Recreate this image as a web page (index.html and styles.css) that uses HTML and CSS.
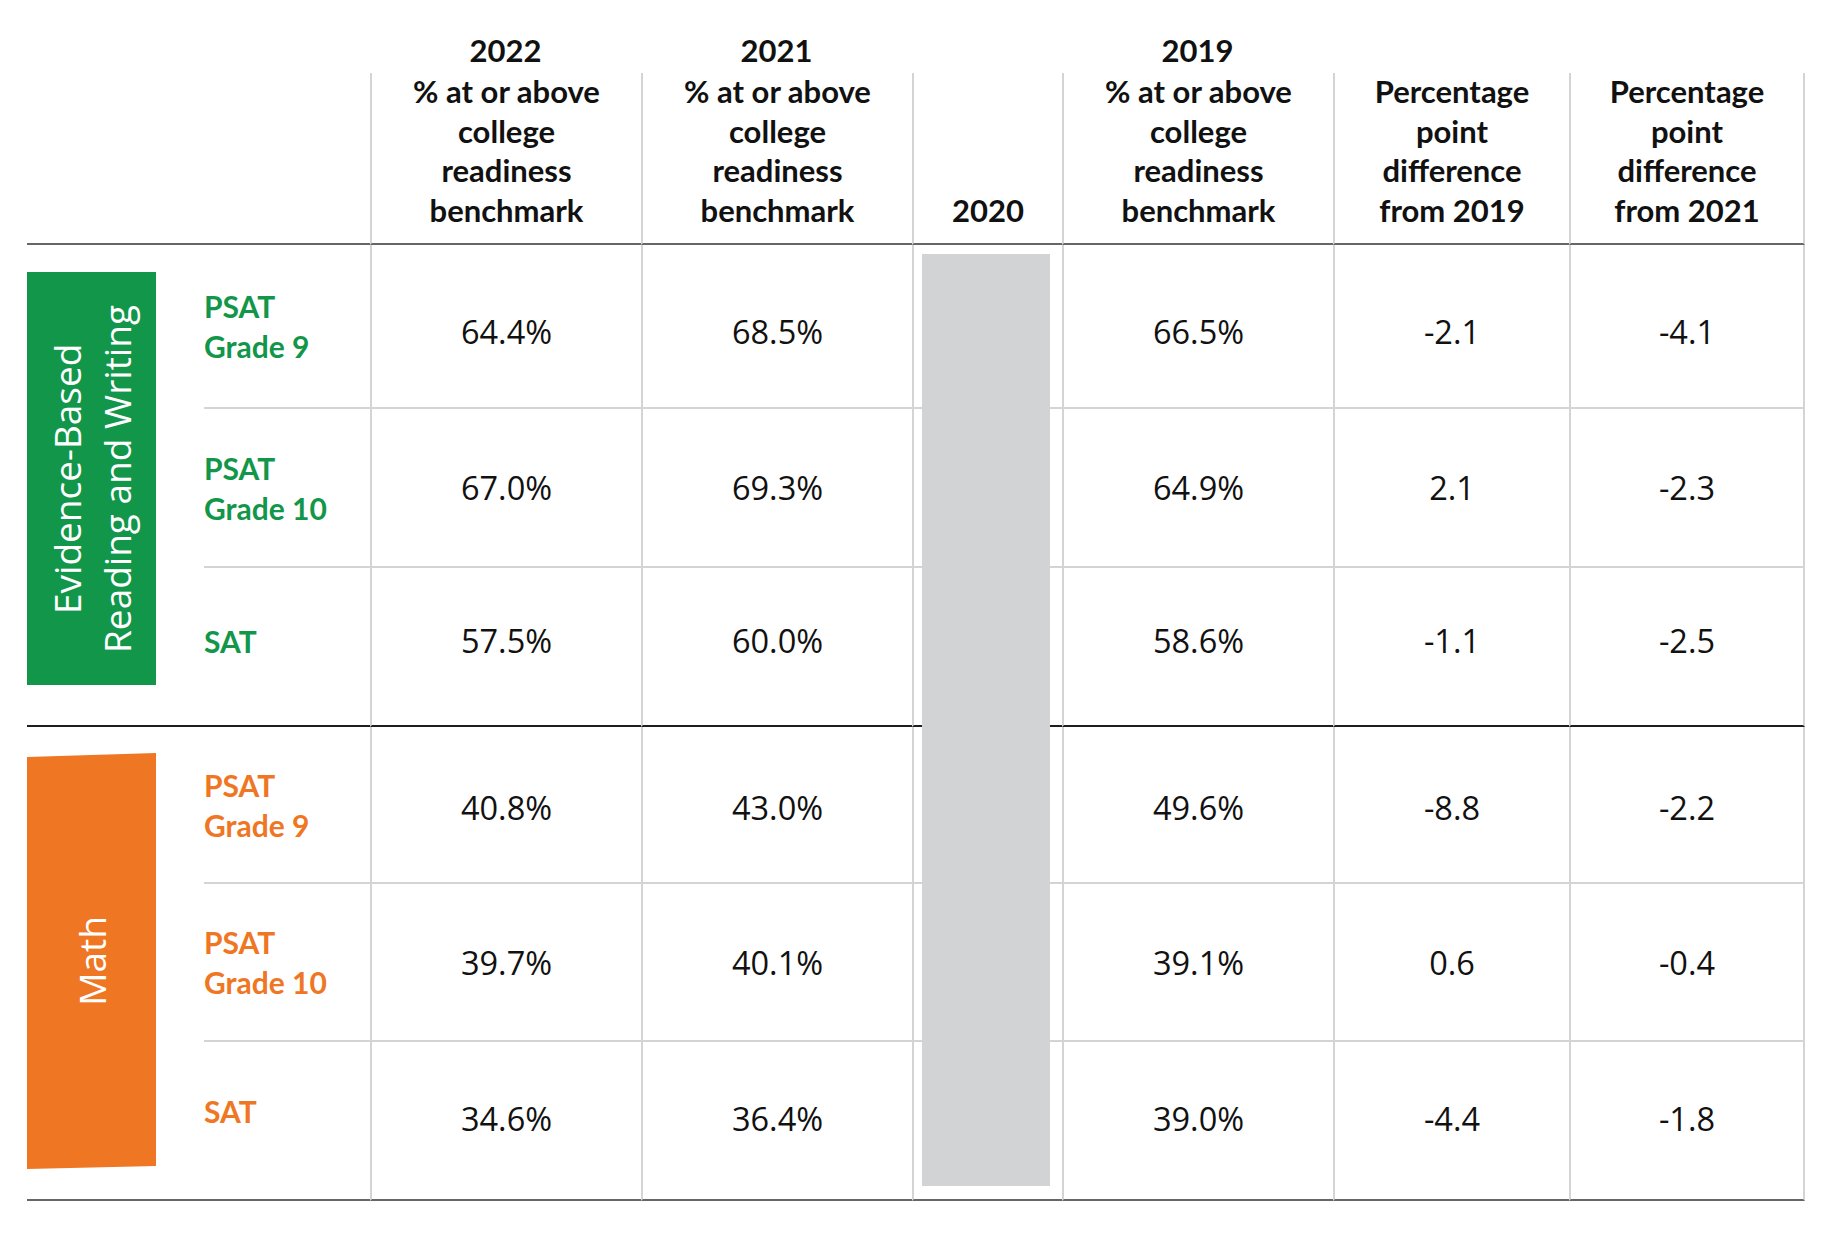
FILE: index.html
```html
<!DOCTYPE html>
<html lang="en">
<head>
<meta charset="utf-8">
<title>College readiness benchmarks</title>
<link rel="stylesheet" href="styles.css">
</head>
<body>
<div class="table">
  <div class="yr"></div>
  <div class="yr"></div>
  <div class="yr">2022</div>
  <div class="yr">2021</div>
  <div class="yr"></div>
  <div class="yr">2019</div>
  <div class="yr"></div>
  <div class="yr"></div>

  <div class="hd"></div>
  <div class="hd"></div>
  <div class="hd vl">% at or above<br>college<br>readiness<br>benchmark</div>
  <div class="hd vl">% at or above<br>college<br>readiness<br>benchmark</div>
  <div class="hd vl">2020</div>
  <div class="hd vl">% at or above<br>college<br>readiness<br>benchmark</div>
  <div class="hd vl">Percentage<br>point<br>difference<br>from 2019</div>
  <div class="hd vl vr">Percentage<br>point<br>difference<br>from 2021</div>

  <div class="grp bd">
    <div class="tag tag-green"><span class="vt">Evidence-Based<br>Reading and Writing</span></div>
  </div>
  <div class="lbl green bl">PSAT<br>Grade 9</div>
  <div class="num vl bl down">64.4%</div>
  <div class="num vl bl down">68.5%</div>
  <div class="y20 vl bl first"><div class="fill"></div></div>
  <div class="num vl bl down">66.5%</div>
  <div class="num vl bl down">-2.1</div>
  <div class="num vl vr bl down">-4.1</div>

  <div class="lbl green bl">PSAT<br>Grade 10</div>
  <div class="num vl bl">67.0%</div>
  <div class="num vl bl">69.3%</div>
  <div class="y20 vl bl"><div class="fill"></div></div>
  <div class="num vl bl">64.9%</div>
  <div class="num vl bl">2.1</div>
  <div class="num vl vr bl">-2.3</div>

  <div class="lbl green bd up">SAT</div>
  <div class="num vl bd up">57.5%</div>
  <div class="num vl bd up">60.0%</div>
  <div class="y20 vl bd"><div class="fill"></div></div>
  <div class="num vl bd up">58.6%</div>
  <div class="num vl bd up">-1.1</div>
  <div class="num vl vr bd up">-2.5</div>

  <div class="grp grp-math bg">
    <div class="tag tag-orange"><span class="vt">Math</span></div>
  </div>
  <div class="lbl orange bl">PSAT<br>Grade 9</div>
  <div class="num vl bl down-s">40.8%</div>
  <div class="num vl bl down-s">43.0%</div>
  <div class="y20 vl bl"><div class="fill"></div></div>
  <div class="num vl bl down-s">49.6%</div>
  <div class="num vl bl down-s">-8.8</div>
  <div class="num vl vr bl down-s">-2.2</div>

  <div class="lbl orange bl">PSAT<br>Grade 10</div>
  <div class="num vl bl">39.7%</div>
  <div class="num vl bl">40.1%</div>
  <div class="y20 vl bl"><div class="fill"></div></div>
  <div class="num vl bl">39.1%</div>
  <div class="num vl bl">0.6</div>
  <div class="num vl vr bl">-0.4</div>

  <div class="lbl orange bg up-more">SAT</div>
  <div class="num vl bg up-s">34.6%</div>
  <div class="num vl bg up-s">36.4%</div>
  <div class="y20 vl bg last"><div class="fill"></div></div>
  <div class="num vl bg up-s">39.0%</div>
  <div class="num vl bg up-s">-4.4</div>
  <div class="num vl vr bg up-s">-1.8</div>
</div>
</body>
</html>
```

FILE: styles.css
```css
* {
  box-sizing: border-box;
}

html, body {
  margin: 0;
  padding: 0;
  background: #ffffff;
}

body {
  width: 1836px;
  height: 1236px;
  overflow: hidden;
  font-family: "Open Sans", "Noto Sans", sans-serif;
  color: #161616;
}

.table {
  margin-left: 27px;
  display: grid;
  grid-template-columns: 177px 166px 271px 271px 150px 271px 236px 236px;
  grid-template-rows: 73px 172px 164px 159px 159px 157px 158px 159px;
  width: 1778px;
}

/* header */
.yr,
.hd {
  font-family: "Lato", "Open Sans", sans-serif;
  font-weight: 700;
  font-size: 31px;
  line-height: 40px;
  color: #111111;
  text-align: center;
}

.yr {
  display: flex;
  align-items: flex-end;
  justify-content: center;
  padding-bottom: 3px;
}

.hd {
  display: flex;
  align-items: flex-end;
  justify-content: center;
  padding-bottom: 13px;
  border-bottom: 2px solid #666666;
  line-height: 39.5px;
}

/* lines */
.vl {
  border-left: 2px solid #d4d4d4;
}

.vr {
  border-right: 2px solid #d4d4d4;
}

.bl {
  border-bottom: 2px solid #d4d4d4;
}

.bd {
  border-bottom: 2px solid #1e1e1e;
}

.bg {
  border-bottom: 2px solid #666666;
}

/* group tags */
.grp {
  grid-row: span 3;
  padding-top: 27px;
}

.grp-math {
  padding-top: 26px;
}

.tag {
  width: 129px;
  display: flex;
  align-items: center;
  justify-content: center;
  color: #ffffff;
  font-family: "Open Sans", "Noto Sans", sans-serif;
  font-size: 37px;
  line-height: 50px;
  font-weight: 400;
}

.tag-green {
  height: 413px;
  background: #12964a;
}

.tag-orange {
  height: 416px;
  background: #ef7623;
  clip-path: polygon(0 4px, 100% 0, 100% calc(100% - 3px), 0 100%);
}

.vt {
  writing-mode: vertical-rl;
  transform: rotate(180deg);
  text-align: center;
  white-space: nowrap;
}

/* row labels */
.lbl {
  display: flex;
  align-items: center;
  font-family: "Lato", "Open Sans", sans-serif;
  font-weight: 700;
  font-size: 30px;
  line-height: 40px;
}

.green {
  color: #12964a;
}

.orange {
  color: #ef7623;
}

/* numbers */
.num {
  display: flex;
  align-items: center;
  justify-content: center;
  font-family: "Open Sans", "Noto Sans", sans-serif;
  font-size: 32.5px;
  font-weight: 400;
  color: #111111;
}

.down {
  padding-top: 10px;
}

.down-s {
  padding-top: 6px;
}

.up {
  padding-bottom: 12px;
}

.up-s {
  padding-bottom: 4px;
}

.up-more {
  padding-bottom: 20px;
}

/* 2020 column bar */
.y20 {
  display: flex;
  padding: 0 12px 0 8px;
}

.y20 .fill {
  flex: 1;
  background: #d1d3d4;
  margin-bottom: -2px;
}

.y20.first {
  padding-top: 9px;
}

.y20.last {
  padding-bottom: 13px;
}

.y20.last .fill {
  margin-bottom: 0;
}
```
